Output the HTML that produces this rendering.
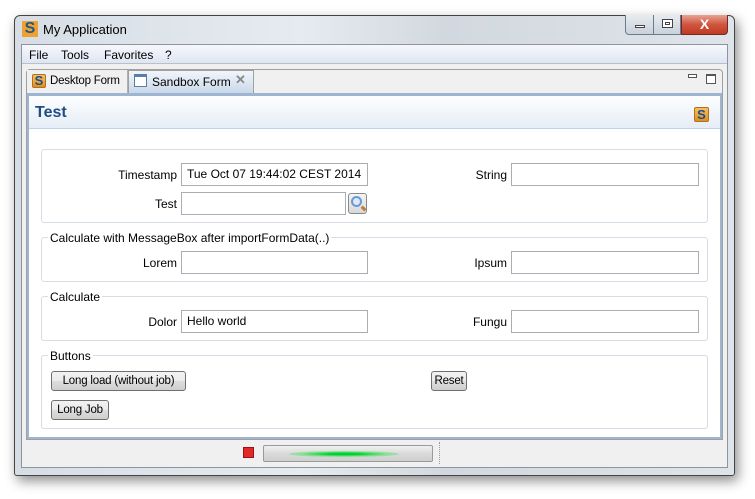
<!DOCTYPE html>
<html><head><meta charset="utf-8"><style>
*{box-sizing:border-box;margin:0;padding:0}
body{width:755px;height:499px;background:#fff;position:relative;overflow:hidden;font-family:"Liberation Sans",sans-serif;font-size:12px;color:#000}
.a{position:absolute;white-space:nowrap}
.win{left:14px;top:15px;width:721px;height:461px;border:1px solid #444;border-radius:6px 6px 3px 3px;background:linear-gradient(90deg,#d6dde5,#e6ebf0 40%,#d2d8df 60%,#dfe4ea);box-shadow:3px 5px 12px rgba(0,0,0,.45)}
.client{left:21px;top:44px;width:707px;height:424px;background:#f0f0f0;border:1px solid #8d949c}
.lbl{text-align:right;width:120px}
.fld{background:#fff;border:1px solid #abadb3;height:23px;padding:3px 5px;line-height:15px}
.grp{border:1px solid #d5dde6;border-radius:3px}
.gt{background:#fff;padding:0 2px;line-height:14px}
.btn{border:1px solid #707070;border-radius:3px;background:linear-gradient(#f2f2f2,#ebebeb 50%,#dddddd 51%,#cfcfcf);height:20px;line-height:18px;padding:0;text-align:center;font-size:11.5px;letter-spacing:-0.2px}
</style></head><body>
<div class="a win"></div>
<!-- title -->
<div class="a" style="left:22px;top:21px;width:16px;height:16px;background:#f0a030;color:#1d5a8a;font-weight:bold;font-size:16px;line-height:16px;text-align:center">S</div>
<div class="a" style="left:43px;top:22px;font-size:13px;color:#000">My Application</div>
<div class="a" style="left:625px;top:15px;width:29px;height:20px;border:1px solid #6f7885;border-top:none;border-radius:0 0 0 4px;background:linear-gradient(#e8ecf1,#c9d1db)"><div class="a" style="left:9px;top:10px;width:10px;height:3px;border:1px solid #444;background:#fff"></div></div>
<div class="a" style="left:653px;top:15px;width:28px;height:20px;border:1px solid #6f7885;border-top:none;background:linear-gradient(#e8ecf1,#c9d1db)"><div class="a" style="left:8px;top:4px;width:11px;height:9px;border:1px solid #444;background:#fff"><div class="a" style="left:2px;top:2px;width:5px;height:3px;border:1px solid #444"></div></div></div>
<div class="a" style="left:681px;top:15px;width:47px;height:20px;border:1px solid #6b2d26;border-top:none;border-radius:0 0 4px 0;background:linear-gradient(#e8a294,#d0553f 50%,#c03a22);color:#fff;font-weight:bold;font-size:14px;text-align:center;line-height:18px">X</div>
<div class="a client"></div>
<!-- menu -->
<div class="a" style="left:22px;top:45px;width:705px;height:19px;background:linear-gradient(#f6f8fc,#dfe5f2);border-bottom:1px solid #b9c0cc"></div>
<div class="a" style="left:29px;top:48px;font-size:12px">File</div>
<div class="a" style="left:61px;top:48px">Tools</div>
<div class="a" style="left:104px;top:48px">Favorites</div>
<div class="a" style="left:165px;top:48px">?</div>
<!-- tab folder -->
<div class="a" style="left:26px;top:69px;width:697px;height:371px;border:1px solid #a0a0a0;border-radius:4px 4px 0 0;background:#f0f0f0"></div>
<div class="a" style="left:27px;top:70px;width:101px;height:23px;background:#f0f0f0;border-right:1px solid #b0b0b0"></div>
<div class="a" style="left:32px;top:74px;width:14px;height:14px;background:linear-gradient(#f8c060,#e09020);border:1px solid #b07020;border-radius:2px;color:#1d4f8a;font-weight:bold;font-size:13px;line-height:12px;text-align:center">S</div>
<div class="a" style="left:50px;top:75px;font-size:11.5px;letter-spacing:-0.2px">Desktop Form</div>
<div class="a" style="left:128px;top:70px;width:126px;height:23px;background:linear-gradient(#f2f6fb,#c9d8ea);border:1px solid #a0a0a0;border-bottom:none"></div>
<div class="a" style="left:134px;top:74px;width:13px;height:13px;border:1px solid #5b7da8;border-top:3px solid #5b7da8;background:#fff"></div>
<div class="a" style="left:152px;top:75px">Sandbox Form</div>
<div class="a" style="left:235px;top:72px;color:#888;font-size:13px;font-weight:bold">✕</div>
<div class="a" style="left:688px;top:74px;width:9px;height:4px;border:1px solid #555;background:#fff"></div>
<div class="a" style="left:706px;top:74px;width:10px;height:10px;border:1px solid #555;border-top:2px solid #555;background:#fff"></div>
<!-- content -->
<div class="a" style="left:27px;top:93px;width:695px;height:346px;border:2px solid #9db5d0;border-top:3px solid #9db5d0;background:#fff"></div>
<div class="a" style="left:29px;top:96px;width:691px;height:33px;background:linear-gradient(#fdfeff,#e6edf6);border-bottom:1px solid #c3d1e2"></div>
<div class="a" style="left:35px;top:104px;font-size:16px;font-weight:bold;color:#1f4d86">Test</div>
<div class="a" style="left:694px;top:107px;width:15px;height:15px;background:linear-gradient(#f8c060,#e09020);border:1px solid #b07020;border-radius:2px;color:#1d4f8a;font-weight:bold;font-size:13px;line-height:13px;text-align:center">S</div>
<!-- group 1 -->
<div class="a grp" style="left:41px;top:149px;width:667px;height:74px"></div>
<div class="a lbl" style="left:57px;top:168px">Timestamp</div>
<div class="a fld" style="left:181px;top:163px;width:187px">Tue Oct 07 19:44:02 CEST 2014</div>
<div class="a lbl" style="left:57px;top:197px">Test</div>
<div class="a fld" style="left:181px;top:192px;width:165px"></div>
<div class="a" style="left:348px;top:193px;width:19px;height:21px;border:1px solid #8a8a8a;border-radius:3px;background:linear-gradient(#f4f4f4,#d8d8d8)"><div class="a" style="left:2px;top:2px;width:11px;height:11px;border:2px solid #6b9ad0;border-radius:50%;background:#dbe9f8"></div><div class="a" style="left:12px;top:13px;width:5px;height:3px;background:#c07a30;transform:rotate(45deg)"></div></div>
<div class="a lbl" style="left:387px;top:168px">String</div>
<div class="a fld" style="left:511px;top:163px;width:188px"></div>
<!-- group 2 -->
<div class="a grp" style="left:41px;top:237px;width:667px;height:45px"></div>
<div class="a gt" style="left:48px;top:231px">Calculate with MessageBox after importFormData(..)</div>
<div class="a lbl" style="left:57px;top:256px">Lorem</div>
<div class="a fld" style="left:181px;top:251px;width:187px"></div>
<div class="a lbl" style="left:387px;top:256px">Ipsum</div>
<div class="a fld" style="left:511px;top:251px;width:188px"></div>
<!-- group 3 -->
<div class="a grp" style="left:41px;top:296px;width:667px;height:45px"></div>
<div class="a gt" style="left:48px;top:290px">Calculate</div>
<div class="a lbl" style="left:57px;top:315px">Dolor</div>
<div class="a fld" style="left:181px;top:310px;width:187px">Hello world</div>
<div class="a lbl" style="left:387px;top:315px">Fungu</div>
<div class="a fld" style="left:511px;top:310px;width:188px"></div>
<!-- group 4 -->
<div class="a grp" style="left:41px;top:355px;width:667px;height:74px"></div>
<div class="a gt" style="left:48px;top:349px">Buttons</div>
<div class="a btn" style="left:51px;top:371px;width:135px">Long load (without job)</div>
<div class="a btn" style="left:431px;top:371px;width:36px">Reset</div>
<div class="a btn" style="left:51px;top:400px;width:58px">Long Job</div>
<!-- status -->
<div class="a" style="left:243px;top:447px;width:11px;height:11px;background:#e02a2a;border:1px solid #a01010"></div>
<div class="a" style="left:263px;top:445px;width:170px;height:17px;border:1px solid #9a9a9a;border-radius:2px;background:linear-gradient(#f0f0f0,#dadada 50%,#cfcfcf)"><div class="a" style="left:25px;top:5px;width:110px;height:6px;border-radius:50%;background:radial-gradient(ellipse,#00d030 20%,rgba(80,230,100,.6) 55%,rgba(200,240,200,0) 100%)"></div></div>
<div class="a" style="left:439px;top:442px;height:22px;border-left:1px dotted #999"></div>
</body></html>
